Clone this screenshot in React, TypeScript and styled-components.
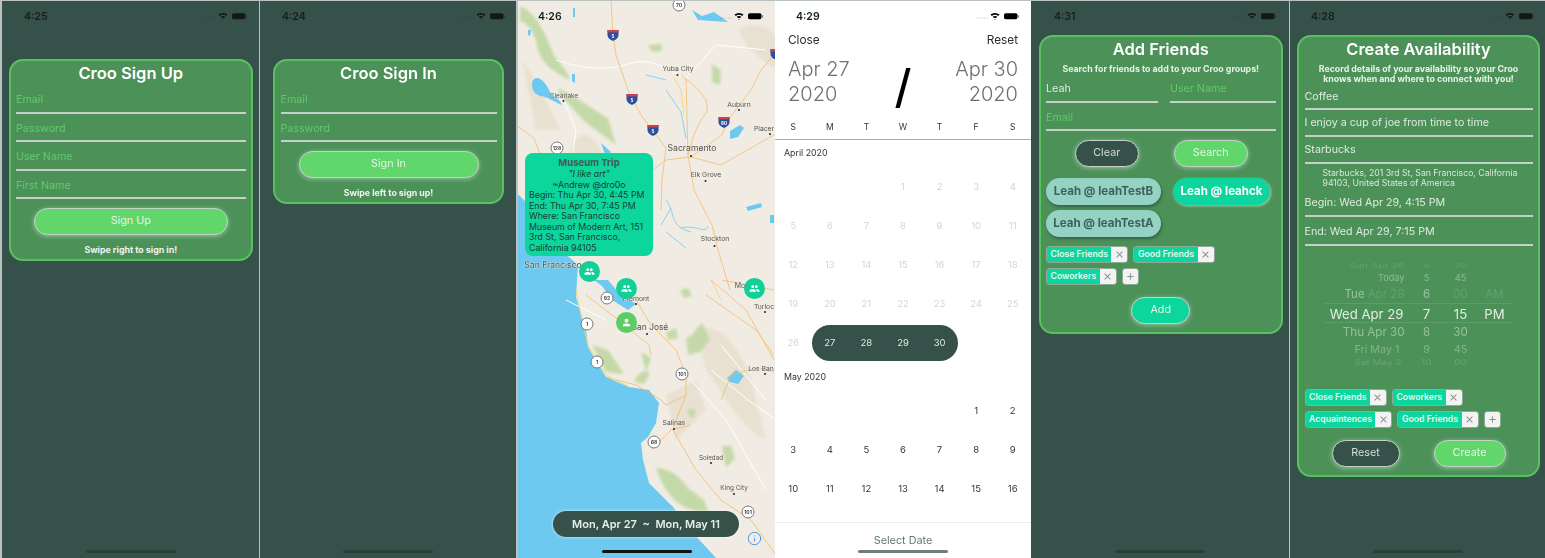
import React from 'react';
import styled, { createGlobalStyle } from 'styled-components';
import { MdPeople, MdPerson, MdClose, MdAdd } from 'react-icons/md';
import { Info } from 'lucide-react';

const GlobalStyle = createGlobalStyle`
    html, body {
        margin: 0;
        height: 558px;
        overflow: hidden;
        background: #b9c2be;
    }
    * {
        box-sizing: border-box;
    }
`;

const Stage = styled.div`
    display: flex;
    align-items: stretch;
    width: 1545px;
    height: 558px;
    padding: 1px 0 0 2px;
    font-family: Inter, 'Liberation Sans', sans-serif;
    filter: blur(0.35px);
`;

const Phone = styled.div<{ $width: number; $after?: number; $light?: boolean }>`
    position: relative;
    display: flex;
    flex-direction: column;
    flex: none;
    width: ${(p) => p.$width}px;
    margin-right: ${(p) => p.$after ?? 0}px;
    background: ${(p) => (p.$light ? '#fff' : '#365149')};
    overflow: hidden;
`;

const StatusBar = styled.div<{ $left: number; $right: number }>`
    display: flex;
    align-items: center;
    justify-content: space-between;
    flex: none;
    height: 30px;
    padding: 0 ${(p) => p.$right}px 0 ${(p) => p.$left}px;
    position: relative;
    z-index: 2;
`;

const Clock = styled.span`
    font-size: 10.5px;
    font-weight: 600;
    color: #151f1c;
`;

const StatusIcons = styled.svg`
    display: block;
`;

const HomeBar = styled.div<{ $color: string; $flush?: boolean }>`
    flex: none;
    width: 90px;
    height: 3px;
    border-radius: 2px;
    margin: ${(p) => (p.$flush ? '0' : 'auto')} auto 5px;
    background: ${(p) => p.$color};
    position: relative;
    z-index: 2;
`;

const Card = styled.div<{ $top: number; $left: number; $right: number; $height: number }>`
    flex: none;
    display: flex;
    flex-direction: column;
    height: ${(p) => p.$height}px;
    margin: ${(p) => p.$top}px ${(p) => p.$right}px 0 ${(p) => p.$left}px;
    padding: 0 5.5px;
    background: #4b9158;
    border: 2px solid #58c25f;
    border-radius: 14px;
`;

const CardTitle = styled.div`
    flex: none;
    height: 23px;
    margin-top: 1px;
    font-size: 16.5px;
    line-height: 23px;
    font-weight: 600;
    text-align: center;
    color: #fff;
`;

const CardNote = styled.div`
    flex: none;
    padding: 3px 0 0;
    font-size: 8.8px;
    line-height: 10px;
    font-weight: 700;
    text-align: center;
    color: #e8f2e8;
`;

const Field = styled.div<{ $height?: number; $placeholder?: boolean }>`
    flex: none;
    display: flex;
    align-items: flex-end;
    height: ${(p) => p.$height ?? 28.6}px;
    padding-bottom: 4.5px;
    border-bottom: 2px solid #c6d0c8;
    font-size: 10.7px;
    line-height: 15px;
    color: ${(p) => (p.$placeholder ? '#5ecb68' : '#dfeadf')};
`;

const FieldRow = styled.div`
    flex: none;
    display: grid;
    grid-template-columns: 112px 106px;
    gap: 12px;
`;

const AddressNote = styled.div`
    flex: none;
    padding: 4px 10px 0 18px;
    height: 26px;
    font-size: 8.7px;
    line-height: 10.5px;
    color: #dbe7db;
`;

const ButtonRow = styled.div<{ $top: number; $gap?: number; $shift?: number }>`
    flex: none;
    display: flex;
    justify-content: center;
    gap: ${(p) => p.$gap ?? 0}px;
    margin-top: ${(p) => p.$top}px;
    padding-left: ${(p) => p.$shift ?? 0}px;
`;

const PillButton = styled.div<{ $width: number; $color: string; $dim?: boolean }>`
    flex: none;
    width: ${(p) => p.$width}px;
    height: 27px;
    border: 1.5px solid #c3d4c6;
    border-radius: 14px;
    background: ${(p) => p.$color};
    box-shadow: 0 1px 5px rgba(255, 255, 255, 0.45);
    font-size: 10.8px;
    line-height: 24px;
    text-align: center;
    color: ${(p) => (p.$dim ? '#d3dcd6' : '#e4f4e6')};
`;

const SwipeHint = styled.div`
    flex: none;
    margin-top: 9px;
    font-size: 8.8px;
    line-height: 11px;
    font-weight: 700;
    text-align: center;
    color: #eef5ee;
`;

const ResultRow = styled.div<{ $top: number; $gap?: number }>`
    flex: none;
    display: flex;
    gap: ${(p) => p.$gap ?? 0}px;
    margin-top: ${(p) => p.$top}px;
`;

const ResultChip = styled.div<{ $active?: boolean; $width: number }>`
    flex: none;
    width: ${(p) => p.$width}px;
    height: 27px;
    border-radius: 14px;
    background: ${(p) => (p.$active ? '#0cd69d' : '#94d2c3')};
    box-shadow: ${(p) =>
        p.$active ? '1px 1px 3px rgba(255, 255, 255, 0.55)' : '1px 2px 3px rgba(40, 60, 50, 0.55)'};
    font-size: 11.5px;
    line-height: 27px;
    font-weight: 700;
    text-align: center;
    white-space: nowrap;
    color: ${(p) => (p.$active ? '#fff' : '#3f605a')};
`;

const TagRow = styled.div<{ $top: number }>`
    flex: none;
    display: flex;
    gap: 5px;
    margin-top: ${(p) => p.$top}px;
`;

const Tag = styled.div`
    display: flex;
    height: 17px;
    border: 1px solid #8eaa94;
    border-radius: 3px;
    overflow: hidden;
`;

const TagLabel = styled.div`
    padding: 0 3.5px;
    background: #0cd69d;
    font-size: 8.7px;
    line-height: 14px;
    font-weight: 600;
    white-space: nowrap;
    color: #e4f8ef;
`;

const TagAction = styled.div`
    display: flex;
    align-items: center;
    justify-content: center;
    width: 16px;
    background: #f3f3f3;
    color: #8d8d8d;
    font-size: 11px;
`;

const LoneAction = styled(Tag)`
    width: 17px;
`;

const Picker = styled.div`
    flex: none;
    margin: 15px 20px 0 19px;
`;

const PickerRow = styled.div<{ $height: number; $size: number; $fade: number; $selected?: boolean; $squash?: number }>`
    display: grid;
    grid-template-columns: 81px 44px 24px 44px;
    align-items: center;
    height: ${(p) => p.$height}px;
    line-height: ${(p) => p.$height}px;
    font-size: ${(p) => p.$size}px;
    color: rgba(226, 238, 228, ${(p) => p.$fade});
    border-style: solid;
    border-color: rgba(255, 255, 255, 0.1);
    border-width: ${(p) => (p.$selected ? '1px 0' : '0')};
    transform: scaleY(${(p) => p.$squash ?? 1});
    white-space: nowrap;
`;

const PickerDate = styled.span<{ $inset?: number }>`
    padding-right: ${(p) => p.$inset ?? 0}px;
    text-align: right;
`;

const PickerFaint = styled.span`
    opacity: 0.3;
`;

const PickerCell = styled.span<{ $faint?: boolean }>`
    text-align: center;
    opacity: ${(p) => (p.$faint ? 0.3 : 1)};
`;

const CalendarHead = styled.div`
    flex: none;
    display: flex;
    justify-content: space-between;
    height: 20px;
    padding: 0 13px;
    font-size: 11.8px;
    line-height: 18px;
    color: #2c2c2c;
`;

const RangeHead = styled.div`
    flex: none;
    display: grid;
    grid-template-columns: 1fr 1fr 1fr;
    height: 57px;
    margin-top: 6px;
    padding: 0 13px;
`;

const RangeDate = styled.div<{ $end?: boolean }>`
    font-size: 20px;
    line-height: 25px;
    font-weight: 300;
    color: #6f6f6f;
    text-align: ${(p) => (p.$end ? 'right' : 'left')};
`;

const RangeSlash = styled.div`
    font-size: 46px;
    line-height: 52px;
    font-weight: 500;
    color: #000;
    text-align: center;
    transform: translateY(3px);
`;

const WeekHead = styled.div`
    flex: none;
    display: grid;
    grid-template-columns: repeat(7, 1fr);
    height: 26px;
    padding-top: 8px;
    border-bottom: 1.5px solid #aaa;
    font-size: 8.5px;
    line-height: 11px;
    text-align: center;
    color: #333;
`;

const MonthLabel = styled.div<{ $top: number }>`
    flex: none;
    height: 12px;
    margin-top: ${(p) => p.$top}px;
    padding-left: 9px;
    font-size: 8.8px;
    line-height: 12px;
    color: #333;
`;

const DayGrid = styled.div<{ $top: number }>`
    flex: none;
    display: grid;
    grid-template-columns: repeat(7, 1fr);
    grid-auto-rows: 39px;
    margin-top: ${(p) => p.$top}px;
`;

const Day = styled.div<{ $muted?: boolean; $range?: boolean; $first?: boolean; $last?: boolean }>`
    display: flex;
    align-items: center;
    justify-content: center;
    height: 36px;
    margin-top: 1.5px;
    font-size: 9.5px;
    color: ${(p) => (p.$range ? '#dfe9e4' : p.$muted ? '#d4d4d4' : '#333')};
    background: ${(p) => (p.$range ? '#365149' : 'transparent')};
    border-radius: ${(p) => (p.$first ? '18px' : '0')} ${(p) => (p.$last ? '18px 18px' : '0 0')}
        ${(p) => (p.$first ? '18px' : '0')};
`;

const SelectBar = styled.div`
    margin-top: auto;
    flex: none;
    height: 28px;
    border-top: 1px solid #eaeaea;
    padding-top: 10px;
    font-size: 10.8px;
    line-height: 15px;
    text-align: center;
    color: #5f7a72;
`;

const MapCanvas = styled.svg`
    position: absolute;
    inset: 0;
`;

const Pin = styled.div<{ $x: number; $y: number; $color: string }>`
    position: absolute;
    left: ${(p) => p.$x - 10.5}px;
    top: ${(p) => p.$y - 11.5}px;
    display: flex;
    align-items: center;
    justify-content: center;
    width: 21px;
    height: 21px;
    border-radius: 50%;
    background: ${(p) => p.$color};
    color: #fff;
    font-size: 11px;
`;

const Bubble = styled.div`
    position: absolute;
    left: 7px;
    top: 152px;
    width: 128px;
    height: 103px;
    padding: 3px 4px;
    border-radius: 8px;
    background: #0dd69c;
    font-size: 8.8px;
    line-height: 10.5px;
    color: #1b3d35;
`;

const BubbleTitle = styled.div`
    font-size: 9.6px;
    line-height: 13px;
    font-weight: 700;
    text-align: center;
    color: #3d5d55;
`;

const BubbleCenter = styled.div<{ $italic?: boolean }>`
    text-align: center;
    font-style: ${(p) => (p.$italic ? 'italic' : 'normal')};
`;

const DatePill = styled.div`
    position: absolute;
    left: 35px;
    top: 510px;
    width: 186px;
    height: 26px;
    border-radius: 13px;
    background: #365149;
    box-shadow: 0 0 3px rgba(255, 255, 255, 0.8);
    font-size: 11px;
    line-height: 26px;
    font-weight: 600;
    white-space: pre;
    text-align: center;
    color: #e8efe9;
`;

const InfoMark = styled.div`
    position: absolute;
    left: 229px;
    top: 530px;
    color: #2e8fe8;
    display: flex;
`;

function StatusGlyphs({ color }: { color: string }) {
    return (
        <StatusIcons width="44" height="10" viewBox="0 0 44 10">
            <g fill={color} opacity="0.3">
                <circle cx="1" cy="7" r="0.6" />
                <circle cx="3.6" cy="7" r="0.6" />
                <circle cx="6.2" cy="7" r="0.6" />
                <circle cx="8.8" cy="7" r="0.6" />
                <circle cx="11.4" cy="7" r="0.6" />
            </g>
            <path
                d="M14.5 3.6 A7 7 0 0 1 23.5 3.6 L22.2 5 A5 5 0 0 0 15.8 5 Z M16.6 5.8 A4 4 0 0 1 21.4 5.8 L20.1 7.1 A2.2 2.2 0 0 0 17.9 7.1 Z M18.9 8.9 L18.4 7.9 A1.2 1.2 0 0 1 19.6 7.9 Z"
                fill={color}
            />
            <rect x="28" y="2.2" width="13.5" height="6" rx="1.6" fill={color} />
            <rect x="42" y="4" width="1" height="2.4" rx="0.5" fill={color} opacity="0.5" />
        </StatusIcons>
    );
}

function TagChip({ label }: { label: string }) {
    return (
        <Tag>
            <TagLabel>{label}</TagLabel>
            <TagAction>
                <MdClose />
            </TagAction>
        </Tag>
    );
}

function AddTag() {
    return (
        <LoneAction>
            <TagAction>
                <MdAdd />
            </TagAction>
        </LoneAction>
    );
}

const Shield = ({ x, y, label }: { x: number; y: number; label: string }) => (
    <g>
        <circle cx={x} cy={y} r="6" fill="#fff" stroke="#777" strokeWidth="1" />
        <text x={x} y={y + 2} fontSize="5" fontWeight="700" textAnchor="middle" fill="#444">
            {label}
        </text>
    </g>
);

const Interstate = ({ x, y, label }: { x: number; y: number; label: string }) => (
    <g>
        <path
            d={`M${x - 5.5} ${y - 5} h11 v5 c0 3 -3 5 -5.5 6 c-2.5 -1 -5.5 -3 -5.5 -6 z`}
            fill="#2d4f9e"
        />
        <rect x={x - 5.5} y={y - 5} width="11" height="2.4" fill="#c8434a" />
        <text x={x} y={y + 3} fontSize="4.5" fontWeight="700" textAnchor="middle" fill="#fff">
            {label}
        </text>
    </g>
);

const City = ({ x, y, label, size = 6.8, dot }: { x: number; y: number; label: string; size?: number; dot?: [number, number] }) => (
    <g>
        <text x={x} y={y} fontSize={size} textAnchor="middle" fill="#55534e" stroke="#f1ece3" strokeWidth="0.6" paintOrder="stroke">
            {label}
        </text>
        {dot && <circle cx={dot[0]} cy={dot[1]} r="1" fill="#222" />}
    </g>
);

function MapArt() {
    return (
        <MapCanvas width="257" height="557" viewBox="2 1 257 557">
            <defs>
                <filter id="soft" x="-10%" y="-10%" width="120%" height="120%">
                    <feGaussianBlur stdDeviation="1.6" />
                </filter>
            </defs>
            <rect x="0" y="0" width="262" height="558" fill="#f1ece3" />
            {/* relief shading */}
            <g fill="#e8e1d2" filter="url(#soft)">
                <path d="M180 330 C205 320 230 350 240 400 L250 440 C225 430 205 390 190 370 Z" />
                <path d="M222 30 C235 20 255 25 262 40 L262 70 C245 60 230 50 222 30 Z" />
                <path d="M55 150 C60 130 75 130 85 150 L90 180 L60 175 Z" />
                <path d="M6 60 C15 70 30 100 45 130 L20 130 Z" />
                <path d="M150 395 L180 380 L190 410 L160 440 Z" />
            </g>
            {/* hills */}
            <g fill="#c4d9a8" filter="url(#soft)">
                <path d="M4 6 C20 12 30 35 38 55 C50 70 60 85 50 78 C35 70 22 62 20 40 C16 28 8 20 4 22 Z" />
                <path d="M42 88 C58 96 75 108 92 118 L100 145 C88 135 70 125 58 110 C50 100 44 98 42 88 Z" />
                <path d="M132 45 L146 44 L146 51 L136 52 Z" />
                <path d="M196 64 L205 70 L204 85 L196 82 Z" />
                <path d="M170 338 L176 335 L186 322 L194 340 L184 352 L172 355 Z" />
                <path d="M164 290 L172 288 L176 296 L168 298 Z" />
                <path d="M118 382 C122 372 130 368 134 374 L128 384 Z" />
                <path d="M140 468 C155 468 165 478 172 488 L188 500 L194 516 L170 508 C152 498 145 482 140 468 Z" />
                <path d="M206 446 L215 446 L219 458 L210 468 Z" />
                <path d="M76 345 L92 350 L108 374 L90 372 Z" />
                <path d="M172 408 L180 410 L178 418 L172 416 Z" />
                <path d="M150 332 L160 328 L162 338 L152 340 Z" />
                <path d="M125 352 L135 358 L130 372 Z" />
            </g>
            {/* ocean and bay */}
            <path
                d="M0 193 C10 200 30 225 45 250 L62 265 L60 297 L70 330 L72 347 L90 377 L113 387 L133 390 L143 403 L140 423 L132 437 L125 443 L127 460 L133 483 L157 507 L177 533 L200 558 L0 558 Z"
                fill="#6ec9f0"
            />
            <path d="M78 280 L86 286 L96 300 L112 310 L120 304 L102 292 L92 280 Z" fill="#6ec9f0" />
            <g fill="#6ec9f0">
                <path d="M17 80 C22 74 30 82 34 92 C38 96 44 100 46 105 C38 102 30 96 24 96 C18 94 14 88 17 80 Z" />
                <path d="M176 10 L186 16 L198 12 L212 22 L196 21 L182 20 Z" />
                <path d="M85 143 L95 152 L90 157 Z" />
                <path d="M214 131 L224 125 L228 128 L222 137 L214 139 Z" />
                <path d="M230 207 L245 203 L246 207 L232 211 Z" />
                <path d="M211 378 L220 370 L228 376 L222 384 L214 382 Z" />
                <path d="M254 215 L258 215 L258 223 L254 223 Z" />
                <path d="M12 30 L15 30 L14 36 L12 35 Z" />
                <path d="M57 8 L59 8 L59 17 L57 17 Z" />
                <path d="M56 74 L59 74 L59 83 L56 81 Z" />
            </g>
            <g fill="none" stroke="#6ec9f0" strokeWidth="0.8">
                <path d="M150 200 C160 212 152 226 175 232 M165 228 C180 224 190 235 192 226 M150 232 L170 248 M155 208 L145 225" />
                <path d="M150 90 L165 112 L170 138 M130 75 L150 80" />
            </g>
            {/* minor roads */}
            <g fill="none" stroke="#fff" strokeWidth="1">
                <path d="M40 60 C70 70 90 70 110 65 C135 55 150 70 170 78 M170 78 L200 45 L250 50" />
                <path d="M48 100 L60 130 L55 170 M50 300 L90 320" />
                <path d="M175 380 L210 420 L250 490 M195 370 L232 400 L260 420" />
                <path d="M205 345 L250 400" />
            </g>
            {/* highways */}
            <g fill="none" stroke="#f4b968" strokeWidth="0.9" opacity="0.85">
                <path d="M95 0 L97 35 L100 55 L112 90 L125 115 L140 135 L150 148 L146 180 L145 210" />
                <path d="M170 78 L172 155 L178 190 L196 225 L202 250 L214 290" />
                <path d="M175 157 L206 135 L212 120 L235 90 L245 70 L258 55" />
                <path d="M0 125 L18 138 L30 170 M40 148 L30 170" />
                <path d="M175 157 L150 160 L130 175 M175 157 L205 165 L258 135" />
                <path d="M172 155 C185 105 195 120 190 100 C180 85 170 80 165 75" />
                <path d="M195 280 L230 310 L258 360" />
                <path d="M120 300 L135 325 L160 350 L170 375 L170 395 L160 420 L157 430 L180 470 L205 500 L235 520 L260 555" />
                <path d="M70 295 L100 318 L133 345 L135 355" />
                <path d="M90 377 L120 385 L145 400 L150 405 L170 395" />
                <path d="M135 450 L155 430 L175 425" />
                <path d="M205 400 L215 375 L240 368 L258 372" />
                <path d="M190 295 L240 330 L258 355 M206 280 L258 290" />
            </g>
            <g fill="none" stroke="#f4d36a" strokeWidth="0.8">
                <path d="M158 78 L165 90 L168 115 M195 280 L205 300" />
                <path d="M60 290 L66 320 L72 345 L90 375 L112 386" />
            </g>
            {/* shields and labels */}
            <Shield x={163} y={5} label="70" />
            <Shield x={41} y={148} label="128" />
            <Shield x={91} y={298} label="92" />
            <Shield x={71} y={324} label="1" />
            <Shield x={81} y={362} label="1" />
            <Shield x={166} y={374} label="101" />
            <Shield x={138} y={442} label="68" />
            <Shield x={232} y={512} label="101" />
            <Interstate x={97} y={35} label="5" />
            <Interstate x={116} y={99} label="5" />
            <Interstate x={137} y={130} label="5" />
            <Interstate x={208} y={122} label="80" />
            <Interstate x={260} y={54} label="" />
            <City x={162} y={71} label="Yuba City" dot={[161.5, 75]} />
            <City x={48} y={98} label="Clearlake" size={6.4} dot={[47.5, 101]} />
            <City x={223} y={107} label="Auburn" dot={[223, 110]} />
            <City x={248} y={131} label="Placer" dot={[254, 134]} />
            <City x={176} y={151} label="Sacramento" size={8.6} dot={[175, 156]} />
            <City x={190} y={177} label="Elk Grove" dot={[189.5, 181]} />
            <City x={199} y={241} label="Stockton" dot={[198.5, 246]} />
            <City x={37} y={268} label="San Francisco" size={8.6} />
            <City x={120} y={301} label="Fremont" dot={[120, 304]} />
            <City x={134} y={330} label="San José" size={8.4} dot={[131, 334]} />
            <City x={224} y={288} label="Mo" size={7} />
            <City x={248} y={309} label="Turloc" dot={[249, 312]} />
            <City x={245} y={371} label="Los Ban" dot={[249, 374]} />
            <City x={158} y={425} label="Salinas" dot={[158, 429]} />
            <City x={195} y={460} label="Soledad" size={6.2} dot={[195, 463]} />
            <City x={218} y={490} label="King City" size={6.4} dot={[218, 494]} />
        </MapCanvas>
    );
}

const aprilDays = [
    null, null, null, 1, 2, 3, 4, 5, 6, 7, 8, 9, 10, 11, 12, 13, 14, 15, 16, 17, 18, 19, 20, 21, 22, 23, 24, 25, 26,
    27, 28, 29, 30,
];
const mayDays = [null, null, null, null, null, 1, 2, 3, 4, 5, 6, 7, 8, 9, 10, 11, 12, 13, 14, 15, 16];

const pickerRows = [
    { h: 9, s: 10.5, f: 0.16, squash: 0.6, d: 'Sun Apr 26', dim: '', hr: '4', mi: '30', ap: '', inset: 0 },
    { h: 15, s: 9.2, f: 0.42, d: 'Today', dim: '', hr: '5', mi: '45', ap: '', inset: 0 },
    { h: 18, s: 11.5, f: 0.52, d: 'Tue ', dim: 'Apr 28', hr: '6', mi: '00', ap: 'AM', faintMin: true, inset: 0 },
    { h: 20, s: 13.2, f: 1, selected: true, d: 'Wed Apr 29', dim: '', hr: '7', mi: '15', ap: 'PM', inset: 1 },
    { h: 19, s: 11.6, f: 0.5, d: 'Thu Apr 30', dim: '', hr: '8', mi: '30', ap: '', inset: 0 },
    { h: 15, s: 10.8, f: 0.36, d: 'Fri May 1', dim: '', hr: '9', mi: '45', ap: '', inset: 5 },
    { h: 10, s: 10, f: 0.2, squash: 0.7, d: 'Sat May 2', dim: '', hr: '10', mi: '00', ap: '', inset: 3 },
];

export default function App() {
    return (
        <>
            <GlobalStyle />
            <Stage>
                <Phone $width={257} $after={1}>
                    <StatusBar $left={22} $right={11}>
                        <Clock>4:25</Clock>
                        <StatusGlyphs color="#111a17" />
                    </StatusBar>
                    <Card $top={28} $left={6.5} $right={6} $height={202}>
                        <CardTitle>Croo Sign Up</CardTitle>
                        <Field $placeholder>Email</Field>
                        <Field $placeholder>Password</Field>
                        <Field $placeholder>User Name</Field>
                        <Field $placeholder>First Name</Field>
                        <ButtonRow $top={9}>
                            <PillButton $width={194} $color="#60d66b">Sign Up</PillButton>
                        </ButtonRow>
                        <SwipeHint>Swipe right to sign in!</SwipeHint>
                    </Card>
                    <HomeBar $color="#2b3f39" />
                </Phone>

                <Phone $width={256} $after={2}>
                    <StatusBar $left={22} $right={10}>
                        <Clock>4:24</Clock>
                        <StatusGlyphs color="#111a17" />
                    </StatusBar>
                    <Card $top={28} $left={13} $right={12} $height={144.5}>
                        <CardTitle>Croo Sign In</CardTitle>
                        <Field $placeholder>Email</Field>
                        <Field $placeholder>Password</Field>
                        <ButtonRow $top={9}>
                            <PillButton $width={180} $color="#60d66b">Sign In</PillButton>
                        </ButtonRow>
                        <SwipeHint>Swipe left to sign up!</SwipeHint>
                    </Card>
                    <HomeBar $color="#2b3f39" />
                </Phone>

                <Phone $width={257}>
                    <MapArt />
                    <StatusBar $left={20} $right={11}>
                        <Clock>4:26</Clock>
                        <StatusGlyphs color="#000" />
                    </StatusBar>
                    <Bubble>
                        <BubbleTitle>Museum Trip</BubbleTitle>
                        <BubbleCenter $italic>"I like art"</BubbleCenter>
                        <BubbleCenter>~Andrew @dro0o</BubbleCenter>
                        Begin: Thu Apr 30, 4:45 PM
                        <br />
                        End: Thu Apr 30, 7:45 PM
                        <br />
                        Where: San Francisco
                        <br />
                        Museum of Modern Art, 151
                        <br />
                        3rd St, San Francisco,
                        <br />
                        California 94105
                    </Bubble>
                    <Pin $x={71} $y={271} $color="#12cf98"><MdPeople /></Pin>
                    <Pin $x={108} $y={288} $color="#12cf98"><MdPeople /></Pin>
                    <Pin $x={236} $y={288} $color="#12cf98"><MdPeople /></Pin>
                    <Pin $x={108} $y={322} $color="#5ccd66"><MdPerson /></Pin>
                    <DatePill>{'Mon, Apr 27  ~  Mon, May 11'}</DatePill>
                    <InfoMark>
                        <Info size={15} strokeWidth={1.4} />
                    </InfoMark>
                    <HomeBar $color="#111" />
                </Phone>

                <Phone $width={256} $light>
                    <StatusBar $left={21} $right={11}>
                        <Clock>4:29</Clock>
                        <StatusGlyphs color="#000" />
                    </StatusBar>
                    <CalendarHead>
                        <span>Close</span>
                        <span>Reset</span>
                    </CalendarHead>
                    <RangeHead>
                        <RangeDate>
                            Apr 27
                            <br />
                            2020
                        </RangeDate>
                        <RangeSlash>/</RangeSlash>
                        <RangeDate $end>
                            Apr 30
                            <br />
                            2020
                        </RangeDate>
                    </RangeHead>
                    <WeekHead>
                        {['S', 'M', 'T', 'W', 'T', 'F', 'S'].map((d, i) => (
                            <span key={i}>{d}</span>
                        ))}
                    </WeekHead>
                    <MonthLabel $top={7}>April 2020</MonthLabel>
                    <DayGrid $top={8}>
                        {aprilDays.map((d, i) =>
                            d === null ? (
                                <Day key={i} />
                            ) : (
                                <Day key={i} $muted={d < 27} $range={d >= 27} $first={d === 27} $last={d === 30}>
                                    {d}
                                </Day>
                            )
                        )}
                    </DayGrid>
                    <MonthLabel $top={9}>May 2020</MonthLabel>
                    <DayGrid $top={8}>
                        {mayDays.map((d, i) => (d === null ? <Day key={i} /> : <Day key={i}>{d}</Day>))}
                    </DayGrid>
                    <SelectBar>Select Date</SelectBar>
                    <HomeBar $color="#6f7e79" $flush />
                </Phone>

                <Phone $width={258} $after={1}>
                    <StatusBar $left={23} $right={12}>
                        <Clock>4:31</Clock>
                        <StatusGlyphs color="#111a17" />
                    </StatusBar>
                    <Card $top={4} $left={7.5} $right={6} $height={299}>
                        <CardTitle>Add Friends</CardTitle>
                        <CardNote>Search for friends to add to your Croo groups!</CardNote>
                        <FieldRow>
                            <Field>Leah</Field>
                            <Field $placeholder>User Name</Field>
                        </FieldRow>
                        <Field $placeholder>Email</Field>
                        <ButtonRow $top={9} $gap={35} $shift={1}>
                            <PillButton $width={64} $color="#365149" $dim>Clear</PillButton>
                            <PillButton $width={74} $color="#60d66b">Search</PillButton>
                        </ButtonRow>
                        <ResultRow $top={11} $gap={12}>
                            <ResultChip $width={115}>Leah @ leahTestB</ResultChip>
                            <ResultChip $width={97} $active>Leah @ leahck</ResultChip>
                        </ResultRow>
                        <ResultRow $top={5}>
                            <ResultChip $width={115}>Leah @ leahTestA</ResultChip>
                        </ResultRow>
                        <TagRow $top={9}>
                            <TagChip label="Close Friends" />
                            <TagChip label="Good Friends" />
                        </TagRow>
                        <TagRow $top={5}>
                            <TagChip label="Coworkers" />
                            <AddTag />
                        </TagRow>
                        <ButtonRow $top={12}>
                            <PillButton $width={59} $color="#0cd69d">Add</PillButton>
                        </ButtonRow>
                    </Card>
                    <HomeBar $color="#2b3f39" />
                </Phone>

                <Phone $width={255}>
                    <StatusBar $left={21} $right={10}>
                        <Clock>4:28</Clock>
                        <StatusGlyphs color="#111a17" />
                    </StatusBar>
                    <Card $top={4} $left={7} $right={5} $height={442}>
                        <CardTitle>Create Availability</CardTitle>
                        <CardNote>
                            Record details of your availability so your Croo
                            <br />
                            knows when and where to connect with you!
                        </CardNote>
                        <Field $height={26}>Coffee</Field>
                        <Field $height={26.6}>I enjoy a cup of joe from time to time</Field>
                        <Field $height={27}>Starbucks</Field>
                        <AddressNote>
                            Starbucks, 201 3rd St, San Francisco, California
                            <br />
                            94103, United States of America
                        </AddressNote>
                        <Field $height={27}>Begin: Wed Apr 29, 4:15 PM</Field>
                        <Field $height={29}>End: Wed Apr 29, 7:15 PM</Field>
                        <Picker>
                            {pickerRows.map((r) => (
                                <PickerRow key={r.d} $height={r.h} $size={r.s} $fade={r.f} $selected={r.selected} $squash={r.squash}>
                                    <PickerDate $inset={r.inset}>
                                        {r.d}
                                        {r.dim && <PickerFaint>{r.dim}</PickerFaint>}
                                    </PickerDate>
                                    <PickerCell>{r.hr}</PickerCell>
                                    <PickerCell $faint={r.faintMin}>{r.mi}</PickerCell>
                                    <PickerCell $faint={r.ap === 'AM'}>{r.ap}</PickerCell>
                                </PickerRow>
                            ))}
                        </Picker>
                        <TagRow $top={22}>
                            <TagChip label="Close Friends" />
                            <TagChip label="Coworkers" />
                        </TagRow>
                        <TagRow $top={5}>
                            <TagChip label="Acquaintences" />
                            <TagChip label="Good Friends" />
                            <AddTag />
                        </TagRow>
                        <ButtonRow $top={12} $gap={34}>
                            <PillButton $width={68} $color="#365149" $dim>Reset</PillButton>
                            <PillButton $width={72} $color="#60d66b">Create</PillButton>
                        </ButtonRow>
                    </Card>
                    <HomeBar $color="#2b3f39" />
                </Phone>
            </Stage>
        </>
    );
}
